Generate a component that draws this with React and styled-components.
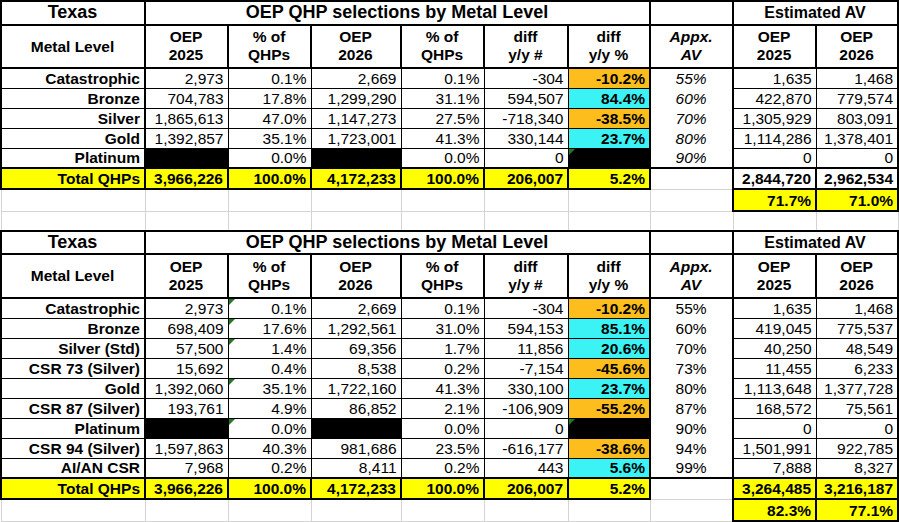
import styled, { createGlobalStyle, css } from "styled-components";

const GlobalStyle = createGlobalStyle`
  html, body {
    margin: 0;
    padding: 0;
    background: #fff;
  }
  body {
    font-family: "Liberation Sans", Arial, sans-serif;
    color: #000;
  }
`;

const GRID = "#d4d4d4";
const YELLOW = "#ffff00";
const ORANGE = "#fcbd1d";
const CYAN = "#3bf2f4";

const edge = (v) => {
  if (v === "x") return "none";
  if (v === 2) return "2px solid #000";
  if (v === 1) return "1px solid #000";
  return `1px solid ${GRID}`;
};

const Sheet = styled.table`
  border-collapse: collapse;
  table-layout: fixed;
  width: 897px;
`;

const Col = styled.col`
  width: ${(p) => p.$w}px;
`;

const Row = styled.tr`
  height: ${(p) => p.$h}px;
`;

const Cell = styled.td`
  position: relative;
  padding: 0 4px 1px 3px;
  font-size: ${(p) => p.$size || 15.5}px;
  font-weight: ${(p) => (p.$bold ? 700 : 400)};
  font-style: ${(p) => (p.$italic ? "italic" : "normal")};
  text-align: ${(p) => p.$align || "right"};
  vertical-align: ${(p) => p.$valign || "bottom"};
  line-height: ${(p) => p.$lh || 17}px;
  background: ${(p) => p.$fill || "#fff"};
  white-space: nowrap;
  overflow: hidden;
  border-top: ${(p) => edge(p.$t)};
  border-right: ${(p) => edge(p.$r)};
  border-bottom: ${(p) => edge(p.$b)};
  border-left: ${(p) => edge(p.$l)};

  ${(p) =>
    p.$flag &&
    css`
      &::before {
        content: "";
        position: absolute;
        top: 0;
        left: 0;
        border-style: solid;
        border-width: 6px 6px 0 0;
        border-color: #1f7a23 transparent transparent transparent;
      }
    `}
`;

const widths = [144, 83, 83, 90, 83, 84, 82, 83, 83, 82];

const table1 = {
  italicAv: true,
  rows: [
    ["Catastrophic", "2,973", "0.1%", "2,669", "0.1%", "-304", "-10.2%", "55%", "1,635", "1,468"],
    ["Bronze", "704,783", "17.8%", "1,299,290", "31.1%", "594,507", "84.4%", "60%", "422,870", "779,574"],
    ["Silver", "1,865,613", "47.0%", "1,147,273", "27.5%", "-718,340", "-38.5%", "70%", "1,305,929", "803,091"],
    ["Gold", "1,392,857", "35.1%", "1,723,001", "41.3%", "330,144", "23.7%", "80%", "1,114,286", "1,378,401"],
    ["Platinum", null, "0.0%", null, "0.0%", "0", null, "90%", "0", "0", { g: true }],
  ],
  total: ["3,966,226", "100.0%", "4,172,233", "100.0%", "206,007", "5.2%", "2,844,720", "2,962,534"],
  avYellow: false,
  share: ["71.7%", "71.0%"],
};

const table2 = {
  italicAv: false,
  rows: [
    ["Catastrophic", "2,973", "0.1%", "2,669", "0.1%", "-304", "-10.2%", "55%", "1,635", "1,468", { c: true }],
    ["Bronze", "698,409", "17.6%", "1,292,561", "31.0%", "594,153", "85.1%", "60%", "419,045", "775,537", { c: true }],
    ["Silver (Std)", "57,500", "1.4%", "69,356", "1.7%", "11,856", "20.6%", "70%", "40,250", "48,549", { c: true }],
    ["CSR 73 (Silver)", "15,692", "0.4%", "8,538", "0.2%", "-7,154", "-45.6%", "73%", "11,455", "6,233"],
    ["Gold", "1,392,060", "35.1%", "1,722,160", "41.3%", "330,100", "23.7%", "80%", "1,113,648", "1,377,728", { c: true }],
    ["CSR 87 (Silver)", "193,761", "4.9%", "86,852", "2.1%", "-106,909", "-55.2%", "87%", "168,572", "75,561"],
    ["Platinum", null, "0.0%", null, "0.0%", "0", null, "90%", "0", "0", { c: true, g: true }],
    ["CSR 94 (Silver)", "1,597,863", "40.3%", "981,686", "23.5%", "-616,177", "-38.6%", "94%", "1,501,991", "922,785"],
    ["AI/AN CSR", "7,968", "0.2%", "8,411", "0.2%", "443", "5.6%", "99%", "7,888", "8,327"],
  ],
  total: ["3,966,226", "100.0%", "4,172,233", "100.0%", "206,007", "5.2%", "3,264,485", "3,216,187"],
  avYellow: true,
  share: ["82.3%", "77.1%"],
};

const diffFill = (v) => (v === null ? "#000" : v.startsWith("-") ? ORANGE : CYAN);

const TitleRow = ({ h }) => (
  <Row $h={h}>
    <Cell $bold $size={18} $align="center" $valign="middle" $t={2} $r={2} $b={2} $l={2}>
      Texas
    </Cell>
    <Cell colSpan={6} $bold $size={18} $align="center" $valign="middle" $t={2} $r={2} $b={2} $l={2}>
      OEP QHP selections by Metal Level
    </Cell>
    <Cell $t={2} $r={2} $b={2} $l={2} />
    <Cell colSpan={2} $bold $size={16} $align="center" $valign="middle" $t={2} $r={2} $b={2} $l={2}>
      Estimated AV
    </Cell>
  </Row>
);

const headers = [
  ["OEP", "2025"],
  ["% of", "QHPs"],
  ["OEP", "2026"],
  ["% of", "QHPs"],
  ["diff", "y/y #"],
  ["diff", "y/y %"],
  ["Appx.", "AV"],
  ["OEP", "2025"],
  ["OEP", "2026"],
];

const HeaderRow = ({ h }) => (
  <Row $h={h}>
    <Cell $bold $align="center" $valign="middle" $t={2} $r={2} $b={2} $l={2}>
      Metal Level
    </Cell>
    {headers.map(([a, b], i) => (
      <Cell
        key={i}
        $bold
        $italic={i === 6}
        $align="center"
        $valign="middle"
        $lh={18}
        $t={2}
        $r={2}
        $b={2}
        $l={2}
      >
        {a}
        <br />
        {b}
      </Cell>
    ))}
  </Row>
);

const DataRow = ({ r, italicAv }) => {
  const flags = r[10] || {};
  const num = (v, extra = {}) => (
    <Cell $t={1} $r={1} $b={1} $l={1} $fill={v === null ? "#000" : undefined} {...extra}>
      {v}
    </Cell>
  );
  return (
    <Row $h={20}>
      <Cell $bold $t={1} $r={2} $b={1} $l={2}>
        {r[0]}
      </Cell>
      {num(r[1])}
      {num(r[2], { $flag: flags.c })}
      {num(r[3])}
      {num(r[4])}
      {num(r[5])}
      <Cell $bold $t={1} $r={2} $b={1} $l={1} $fill={diffFill(r[6])} $flag={flags.g}>
        {r[6]}
      </Cell>
      <Cell $align="center" $italic={italicAv} $t="x" $b="x" $l={2} $r={2}>
        {r[7]}
      </Cell>
      {num(r[8], { $l: 2 })}
      {num(r[9], { $r: 2 })}
    </Row>
  );
};

const TotalRow = ({ t, avYellow }) => (
  <Row $h={21}>
    <Cell $bold $fill={YELLOW} $t={2} $r={2} $b={2} $l={2}>
      Total QHPs
    </Cell>
    {t.slice(0, 6).map((v, i) => (
      <Cell key={i} $bold $fill={YELLOW} $t={2} $r={2} $b={2} $l={2}>
        {v}
      </Cell>
    ))}
    <Cell $t={2} $r={2} $l={2} $b="x" />
    {t.slice(6).map((v, i) => (
      <Cell key={i} $bold $fill={avYellow ? YELLOW : undefined} $t={2} $r={2} $b={2} $l={2}>
        {v}
      </Cell>
    ))}
  </Row>
);

const ShareRow = ({ s }) => (
  <Row $h={22}>
    {Array.from({ length: 8 }, (_, i) => (
      <Cell key={i} />
    ))}
    {s.map((v, i) => (
      <Cell key={i} $bold $fill={YELLOW} $t={2} $r={2} $b={2} $l={2}>
        {v}
      </Cell>
    ))}
  </Row>
);

const BlankRow = () => (
  <Row $h={20}>
    {widths.map((_, i) => (
      <Cell key={i} />
    ))}
  </Row>
);

const Block = ({ data, titleH, headerH }) => (
  <>
    <TitleRow h={titleH} />
    <HeaderRow h={headerH} />
    {data.rows.map((r) => (
      <DataRow key={r[0]} r={r} italicAv={data.italicAv} />
    ))}
    <TotalRow t={data.total} avYellow={data.avYellow} />
    <ShareRow s={data.share} />
  </>
);

export default function App() {
  return (
    <>
      <GlobalStyle />
      <Sheet>
        <colgroup>
          {widths.map((w, i) => (
            <Col key={i} $w={w} />
          ))}
        </colgroup>
        <tbody>
          <Block data={table1} titleH={24} headerH={43} />
          <BlankRow />
          <Block data={table2} titleH={23} headerH={44} />
        </tbody>
      </Sheet>
    </>
  );
}
